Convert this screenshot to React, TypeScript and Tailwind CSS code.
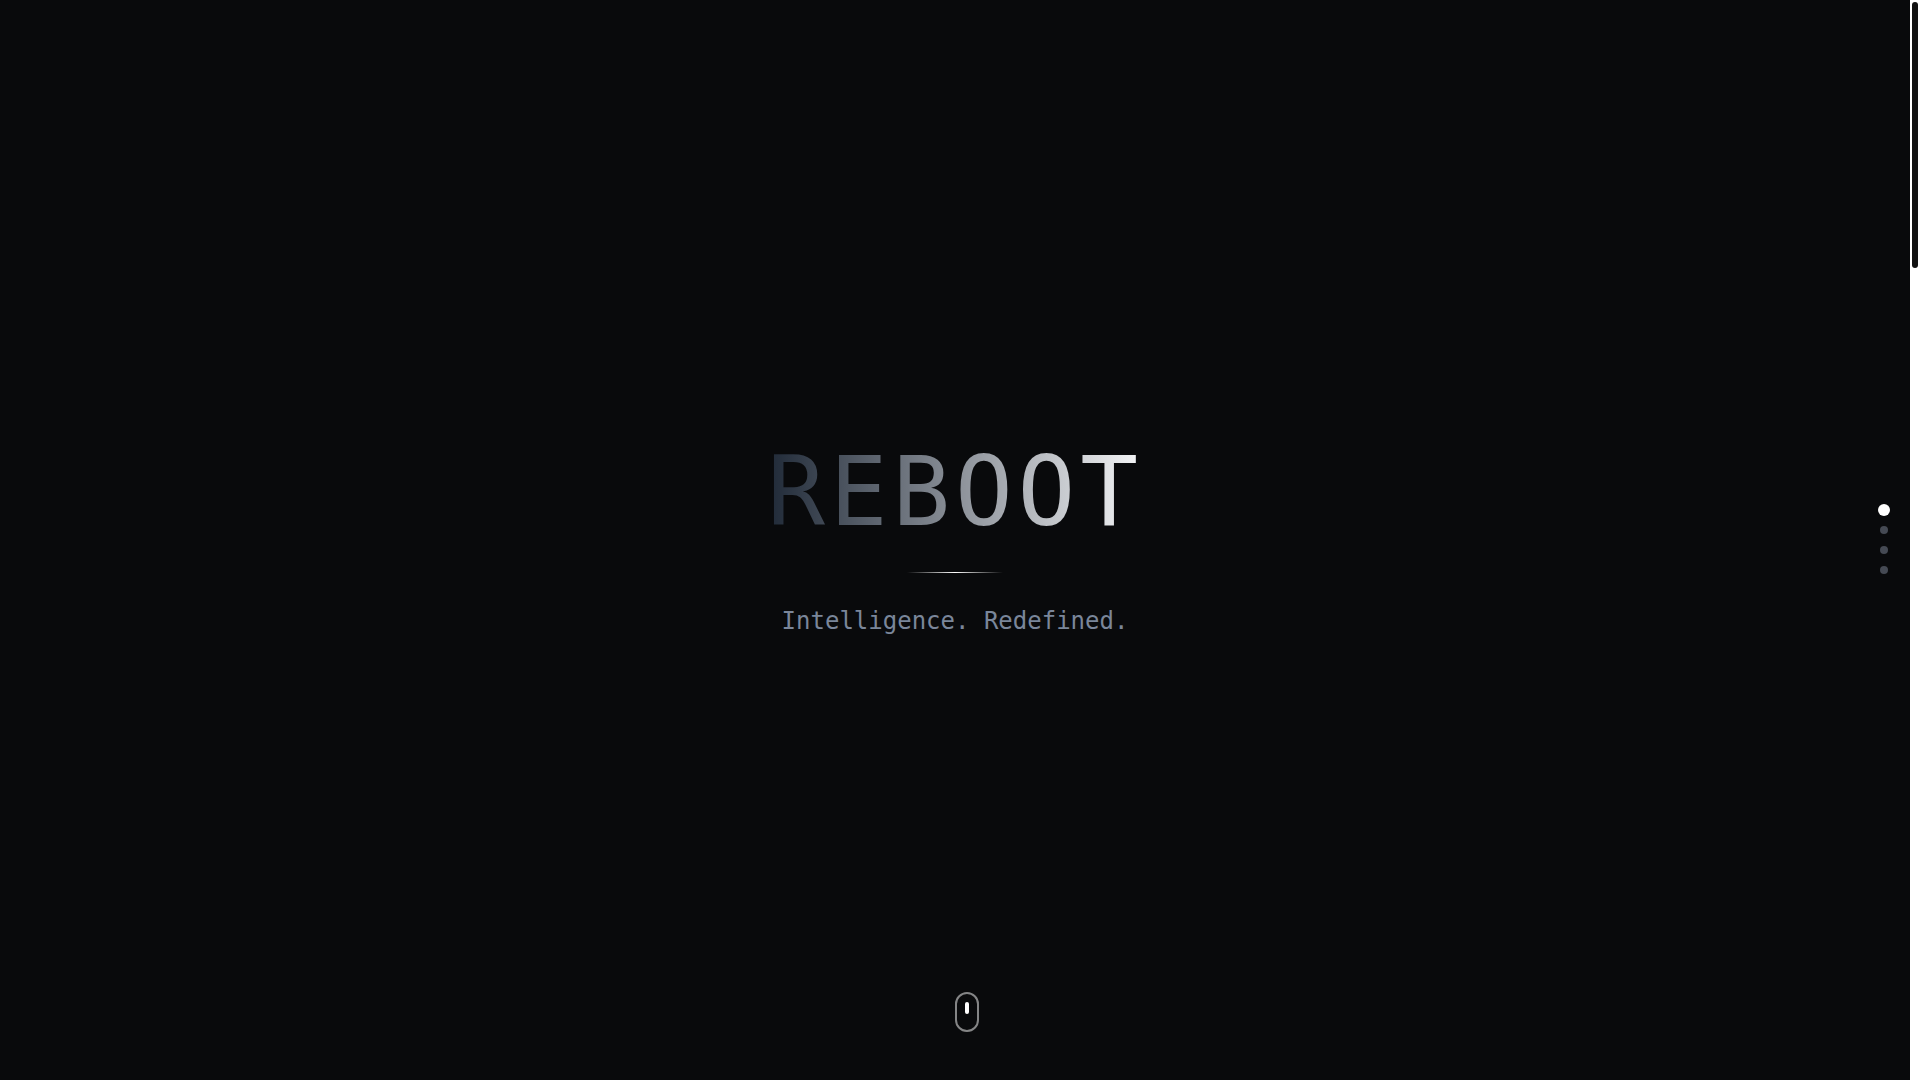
import clsx from "clsx";

const sections = ["Intro", "Vision", "Technology", "Contact"];

function SectionNav({ active }: { active: number }) {
  return (
    <nav aria-label="Sections" className="fixed right-8 top-1/2 flex -translate-y-1/2 flex-col items-center gap-3">
      {sections.map((name, i) => (
        <button
          key={name}
          type="button"
          aria-label={name}
          className={clsx("h-2 w-2 cursor-pointer rounded-full", i === active ? "scale-150 bg-white" : "bg-[#454a54]")}
        />
      ))}
    </nav>
  );
}

function ScrollHint() {
  return (
    <div className="absolute bottom-12 left-1/2 flex h-10 w-6 justify-center rounded-full border-2 border-white/50">
      <div className="mt-2 h-3 w-1 rounded-full bg-white" />
    </div>
  );
}

function ScrollRail() {
  return (
    <div className="w-2.5 shrink-0 bg-white p-0.5">
      <div className="h-[266px] w-1.5 rounded-full bg-[#111111]" />
    </div>
  );
}

export default function App() {
  return (
    <div className="flex h-screen overflow-hidden bg-[#090a0c] font-['DejaVu_Sans_Mono',monospace]">
      <main className="relative flex flex-1 flex-col items-center justify-center">
        <h1 className="bg-linear-to-r/srgb from-[#1f2937] to-[#f5f6f8] bg-clip-text text-8xl font-light tracking-wider text-transparent">
          REBOOT
        </h1>
        <div className="mt-8 h-px w-24 bg-linear-to-r/srgb from-transparent via-white to-transparent" />
        <p className="mt-8 text-2xl font-light text-[#7a869a]">Intelligence. Redefined.</p>
        <ScrollHint />
      </main>
      <SectionNav active={0} />
      <ScrollRail />
    </div>
  );
}
